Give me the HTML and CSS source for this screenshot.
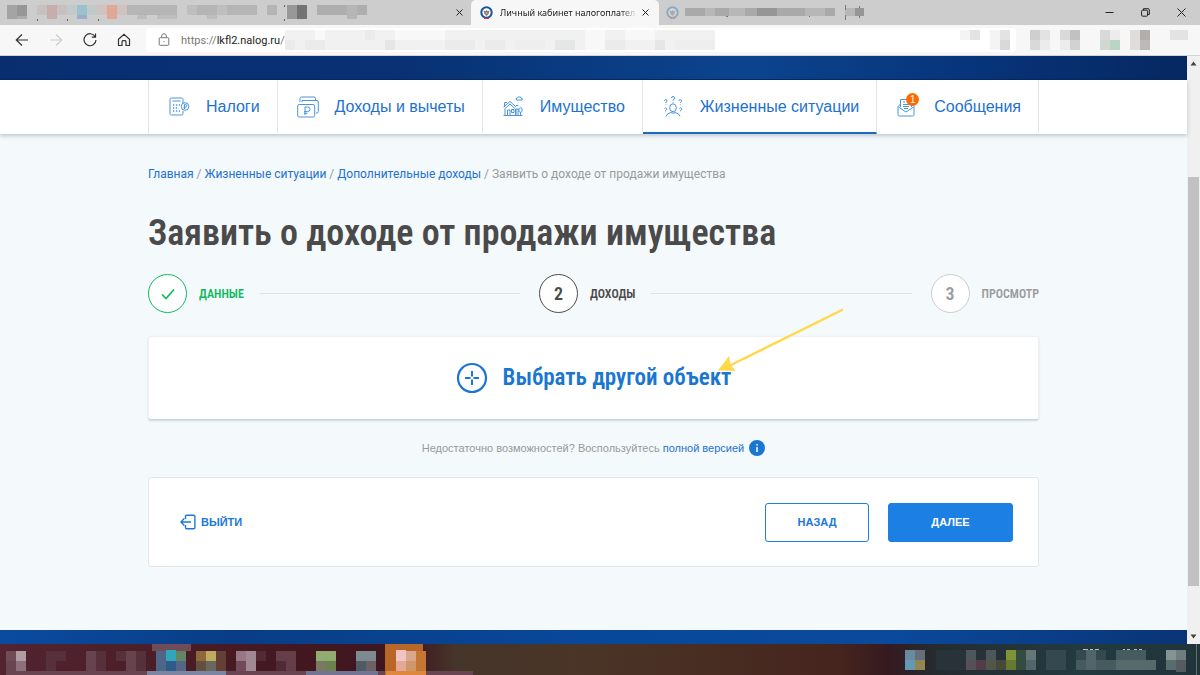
FILE: index.html
```html
<!DOCTYPE html>
<html lang="ru">
<head>
<meta charset="utf-8">
<title>Личный кабинет налогоплательщика</title>
<link rel="stylesheet" href="styles.css">
</head>
<body>
<div class="browser">
  <div class="tabstrip">
    <div class="tab tab-first">
      <svg class="blur-tabs" width="375" height="25" shape-rendering="crispEdges" aria-hidden="true">
        <path fill="#a4a4a4" d="M7 5h10v14H7z"/><path fill="#979797" d="M17 5h10v11H17z"/><path fill="#acacac" d="M17 16h10v3H17z"/>
        <path fill="#c7c0c0" d="M37 5h10v10H37zM57 5h10v10H57z"/><path fill="#c8adad" d="M47 5h10v14H47z"/>
        <path fill="#c2c9ca" d="M67 5h10v10H67zM87 5h10v10H87z"/><path fill="#9ac1cc" d="M77 5h10v10H77z"/><path fill="#9daec8" d="M77 15h10v4H77z"/>
        <path fill="#cfc2bf" d="M97 5h10v10H97zM117 5h10v10H117z"/><path fill="#e0a796" d="M107 5h10v14H107z"/>
        <path fill="#b5b5b5" d="M127 5h50v10H127zM197 5h20v10H197zM227 5h30v10H227zM267 5h10v10H267z"/>
        <path fill="#bebebe" d="M137 15h10v4H137zM157 15h20v4H157zM187 5h10v10H187zM207 15h10v4H207zM217 5h10v10H217z"/>
        <path fill="#989898" d="M287 5h10v14H287z"/><path fill="#737373" d="M297 5h10v14H297z"/>
        <path fill="#aeaeae" d="M317 5h30v10H317zM357 5h10v10H357z"/><path fill="#b5b6b8" d="M347 5h10v14H347z"/>
        <path fill="#666" d="M37 19h1v2h-1zM67 19h1v2h-1zM98 19h1v2h-1zM284 5h1v2h-1zM284 19h1v2h-1z"/>
      </svg>
      <button class="tab-close" aria-label="Закрыть вкладку"><svg width="7" height="7" viewBox="0 0 7 7"><path d="M.5.5l6 6M6.500.5l-6 6"/></svg></button>
    </div>
    <div class="tab tab-active">
      <svg class="favicon" width="13" height="13" viewBox="0 0 13 13"><circle cx="6.500" cy="6.500" r="5.200" fill="#fff" stroke="#17549c" stroke-width="2"/><path d="M3.500 4.500l2 .8 1-1.300 1 1.300 2-.8-1 3.500-2 2-2-2z" fill="#75767d"/><path d="M5.500 6h2v2h-2z" fill="#d9a84e"/><path d="M4 11.700h5v1.300H4z" fill="#d33"/></svg>
      <span class="tab-title">Личный кабинет налогоплател</span>
      <button class="tab-close" aria-label="Закрыть вкладку"><svg width="7" height="7" viewBox="0 0 7 7"><path d="M.5.5l6 6M6.500.5l-6 6"/></svg></button>
    </div>
    <div class="tab tab-last">
      <svg class="favicon faded" width="13" height="13" viewBox="0 0 13 13"><circle cx="6.500" cy="6.500" r="5.200" fill="#ddd" stroke="#5b94c0" stroke-width="2"/><path d="M3.500 4.500l2 .8 1-1.300 1 1.300 2-.8-1 3.500-2 2-2-2z" fill="#8e939b"/><path d="M4 11.700h5v1.300H4z" fill="#d66"/></svg>
      <svg width="190" height="25" shape-rendering="crispEdges" aria-hidden="true">
        <path fill="#a9a9a9" d="M6 8h20v8H6zM36 8h14v8H36zM66 8h60v8H66zM146 8h10v8h-10z"/><path fill="#b7b7b7" d="M26 8h10v8H26zM50 8h16v8H50zM126 8h20v8h-20zM166 8h10v8h-10z"/>
        <path fill="#969696" d="M78 8h20v8H78zM176 8h9v8h-9z"/><path fill="#777" d="M166 5h1v5h-1zM166 15h1v5h-1zM180 6h1v2h-1zM180 16h1v2h-1zM130 16h1v1h-1zM47 16h2v1h-2z"/>
      </svg>
    </div>
    <div class="window-controls">
      <button aria-label="Свернуть"><svg width="9" height="9" viewBox="0 0 9 9"><path d="M.5 4.500h8"/></svg></button>
      <button aria-label="Восстановить"><svg width="9" height="9" viewBox="0 0 9 9"><rect x=".6" y="2.200" width="6" height="6" rx="1"/><path d="M2.500 2V.7h4.700q1.100 0 1.100 1.100v4.700H7"/></svg></button>
      <button aria-label="Закрыть"><svg width="9" height="9" viewBox="0 0 9 9"><path d="M.5.5l8 8M8.500.5l-8 8"/></svg></button>
    </div>
  </div>

  <div class="toolbar">
    <button class="tool" aria-label="Назад"><svg width="14" height="14" viewBox="0 0 14 14"><path d="M7 1.500L1.300 7 7 12.500M1.500 7H13"/></svg></button>
    <button class="tool tool-off" aria-label="Вперёд" disabled><svg width="14" height="14" viewBox="0 0 14 14"><path d="M7 1.500L12.700 7 7 12.500M12.500 7H1"/></svg></button>
    <button class="tool" aria-label="Обновить"><svg width="14" height="14" viewBox="0 0 14 14"><path d="M12.200 3.700A6 6 0 1 0 13 7M12.500.5v3.700H8.800"/></svg></button>
    <button class="tool" aria-label="Домой"><svg width="14" height="14" viewBox="0 0 14 14"><path d="M1.500 6.300L7 1.300l5.500 5v6.200H9V8.700q0-1-1-1H6q-1 0-1 1v3.800H1.500z"/></svg></button>
    <div class="address">
      <svg class="lock" width="12" height="14" viewBox="0 0 12 14"><rect x="1.200" y="4.700" width="9.600" height="7.600" rx="1"/><path d="M3.700 4.500V3a2.300 2.300 0 0 1 4.600 0v1.500M6 8v1.200"/></svg>
      <span class="url">https://<b>lkfl2.nalog.ru</b>/</span>
      <svg class="blur-url" width="430" height="20" shape-rendering="crispEdges" aria-hidden="true">
        <path fill="#f1f1f1" d="M0 0h430v20H0z"/><path fill="#ebebeb" d="M0 10h10v10H0zM20 10h20v10H20zM80 0h10v10H80zM160 10h30v10h-30zM200 10h20v10h-20zM320 10h20v10h-20z"/><path fill="#e5e7e7" d="M100 10h10v10h-10zM270 10h20v10h-20zM370 10h10v10h-10z"/><path fill="#f8f8f8" d="M30 0h10v10H30zM110 0h50v10h-50zM300 0h20v20h-20zM340 0h30v10h-30z"/><path fill="#eee" d="M230 10h30v10h-30zM390 10h40v10h-40z"/>
      </svg>
    </div>
    <svg class="blur-ext" width="230" height="20" shape-rendering="crispEdges" aria-hidden="true">
      <path fill="#f4f4f4" d="M0 0h10v10H0zM30 0h10v20H30z"/><path fill="#e3e3e3" d="M10 0h10v10H10zM40 0h10v10H40zM80 0h10v10H80zM210 0h18v10h-18z"/><path fill="#d9d9d9" d="M40 10h10v10H40zM70 10h10v10H70zM100 0h10v10h-10zM140 0h10v10h-10z"/><path fill="#cfcfcf" d="M70 0h10v10H70z"/><path fill="#c1c1c1" d="M110 0h10v10h-10z"/><path fill="#d2d2d2" d="M110 10h10v10h-10z"/><path fill="#ececec" d="M80 10h10v10H80zM100 10h10v10h-10zM150 0h10v10h-10z"/><path fill="#cfd8d1" d="M140 10h10v10h-10z"/><path fill="#b9d6c4" d="M150 10h10v10h-10z"/><path fill="#dfdddb" d="M170 0h10v20h-10z"/><path fill="#b2afab" d="M180 0h10v10h-10z"/><path fill="#bcbab8" d="M180 10h10v10h-10z"/>
    </svg>
  </div>

  <div class="viewport">
    <div class="page">
      <div class="banner"></div>
      <nav class="nav">
        <div class="container nav-list">
          <a class="nav-item" href="#">
            <svg width="22" height="22" viewBox="0 0 22 22"><path d="M15 7V3.500Q15 2 13.500 2h-10Q2 2 2 3.500v14Q2 19 3.500 19h10q1.500 0 1.500-1.500V15M4.500 5h8"/><path stroke-dasharray="1.300 1.600" stroke-width="1.600" d="M5 9h7M5 12h6M5 15h7"/><circle cx="17" cy="10.500" r="3.800"/><path d="M16.500 13V8.500h1q1.300 0 1.300 1.200T17.500 11h-2M15.500 12h2"/></svg>
            <span>Налоги</span></a>
          <a class="nav-item" href="#">
            <svg width="22" height="22" viewBox="0 0 22 22"><path d="M3 6V2.500Q3 1 4.500 1H17q1.500 0 1.500 1.500v2M5 6V4.500h15q1.300 0 1.300 1.500v9.500q0 1.500-1.300 1.500h-1"/><rect x=".7" y="8.500" width="17" height="12.500" rx="1.500"/><path d="M8 19v-8h2.500q2.500 0 2.500 2.300t-2.500 2.300H7M7 17.300h3.500"/></svg>
            <span>Доходы и вычеты</span></a>
          <a class="nav-item" href="#">
            <svg width="22" height="22" viewBox="0 0 22 22"><path d="M1.500 19.500h19M2.500 11v-4.500H5M1.500 11L8 5.500l6 5.500M2.500 13l5.500-5 5.500 5v6M3 13v6M5.500 19v-5h2.500v5M9.500 13.500h2.500v3H9.500zM14 19v-6h2v6M16.500 9.500H14M18.500 19v-3"/><ellipse cx="18.500" cy="14" rx="1.700" ry="2.300"/><path d="M14.500 4q-1.500-2 1-2 .5-1.800 2.300-1 1.500-.2 1.200 1.200 2 .1 1.300 1.800z"/></svg>
            <span>Имущество</span></a>
          <a class="nav-item current" href="#" aria-current="page">
            <svg width="22" height="22" viewBox="0 0 22 22"><ellipse cx="11" cy="11.800" rx="3.300" ry="4"/><path d="M4 20.500q.5-3 5-4 2 1.500 4 0 4.500 1 5 4M9.500 2q0-1.500 1.500-1.500T12.500 2 11 4v.7M11 6v.7M2.500 4.800q0-1.200 1.300-1.200T5 4.800 3.800 6.400V7M3.800 8v.6M17 4.800q0-1.200 1.300-1.200t1.200 1.200-1.200 1.600V7M18.300 8v.6M2.500 12.500q1-1.200 2 0t-1 2v.8M17.500 12.500q1-1.200 2 0t-1 2v.8"/></svg>
            <span>Жизненные ситуации</span></a>
          <a class="nav-item" href="#">
            <span class="mail">
              <svg width="22" height="22" viewBox="0 0 22 22"><path d="M4.500 11V3.500h11V11M4.500 8L2 10.500v8Q2 20 3.500 20h13q1.500 0 1.500-1.500v-8L15.500 8M2.500 11l7.500 5 7.500-5M7 6h2M7 8.500h6M7 10.500h6M8 12.500h4"/></svg>
              <span class="badge">1</span>
            </span>
            <span>Сообщения</span></a>
        </div>
      </nav>

      <main class="container main">
        <div class="crumbs"><a href="#">Главная</a> / <a href="#">Жизненные ситуации</a> / <a href="#">Дополнительные доходы</a> / Заявить о доходе от продажи имущества</div>
        <h1>Заявить о доходе от продажи имущества</h1>

        <div class="steps">
          <div class="step done"><span class="dot"><svg width="14" height="12" viewBox="0 0 14 12"><path d="M1 6.500l4 4L13 1.500"/></svg></span><span class="step-name">ДАННЫЕ</span></div>
          <div class="line"></div>
          <div class="step active"><span class="dot">2</span><span class="step-name">ДОХОДЫ</span></div>
          <div class="line"></div>
          <div class="step"><span class="dot">3</span><span class="step-name">ПРОСМОТР</span></div>
        </div>

        <section class="card choose">
          <button class="choose-button">
            <svg width="32" height="32" viewBox="0 0 32 32"><circle cx="16" cy="16" r="14" stroke-width="2.200"/><path stroke-width="2" d="M16 9v5.500M16 17.500V23M9 16h5.500M17.500 16H23"/></svg>
            <span>Выбрать другой объект</span>
          </button>
          <svg class="pointer" width="128" height="66" viewBox="0 0 128 66" aria-hidden="true"><path d="M125 2L12 58" stroke="#ffd94a" stroke-width="2.400" stroke-linecap="round"/><path d="M1 62.500L12 48 13.500 57l5 6z" fill="#ffd94a"/></svg>
        </section>

        <p class="hint"><span>Недостаточно возможностей? Воспользуйтесь <a href="#">полной версией</a></span>
          <svg width="16" height="16" viewBox="0 0 16 16"><circle cx="8" cy="8" r="8" fill="#1976d2"/><path d="M8 4v1.600M8 7v5" stroke="#fff" stroke-width="1.500"/></svg></p>

        <section class="card actions">
          <a class="exit" href="#"><svg width="16" height="16" viewBox="0 0 16 16"><path d="M5.500 5V2.500q0-1.200 1.200-1.200h7q1.200 0 1.200 1.200v11q0 1.200-1.200 1.200h-7q-1.200 0-1.200-1.200V11M11 8H1M4.300 4.500L.9 8l3.400 3.500"/></svg>ВЫЙТИ</a>
          <div class="buttons">
            <button class="btn btn-back">НАЗАД</button>
            <button class="btn btn-next">ДАЛЕЕ</button>
          </div>
        </section>
      </main>
      <div class="footer-band"></div>
    </div>
    <div class="scrollbar" aria-hidden="true">
      <svg width="7" height="5" viewBox="0 0 7 5"><path d="M.5 4.500l3-4 3 4z"/></svg>
      <div class="track"><div class="thumb"></div></div>
      <svg width="7" height="5" viewBox="0 0 7 5"><path d="M.5.5l3 4 3-4z"/></svg>
    </div>
  </div>

  <div class="taskbar" aria-hidden="true">
    <svg width="475" height="31" shape-rendering="crispEdges">
      <path fill="#694551" d="M6 27h467v4H6z"/>
      <path fill="#704c57" d="M6 7h10v10H6z"/><path fill="#b09ca3" d="M16 7h10v10H16z"/><path fill="#694451" d="M6 17h10v10H6z"/><path fill="#8e707c" d="M16 17h10v10H16z"/>
      <path fill="#56303a" d="M46 7h20v10H46zM46 17h10v10H46zM96 7h10v20H96zM116 7h10v10h-10zM136 7h10v20h-10z"/><path fill="#66434e" d="M86 7h10v20H86zM126 7h10v20h-10z"/>
      <path fill="#704c58" d="M152 0h39v7h-39z"/><path fill="#4e6688" d="M156 7h10v20h-10z"/><path fill="#30a5bb" d="M166 6h10v11h-10z"/><path fill="#2f5b8a" d="M166 17h10v10h-10z"/><path fill="#648563" d="M176 7h10v10h-10z"/><path fill="#576687" d="M176 17h10v10h-10z"/>
      <path fill="#7c86a3" d="M147 27h79v4h-79z"/><path fill="#8f693a" d="M196 7h10v10h-10z"/><path fill="#c0a961" d="M206 7h10v10h-10z"/><path fill="#633f35" d="M216 7h10v20h-10z"/><path fill="#64503e" d="M196 17h10v10h-10z"/><path fill="#68685e" d="M206 17h10v10h-10z"/>
      <path fill="#967882" d="M236 7h10v10h-10z"/><path fill="#a18993" d="M246 7h10v20h-10z"/><path fill="#714b59" d="M236 17h10v10h-10z"/><path fill="#502a34" d="M256 7h10v10h-10zM276 17h10v10h-10z"/><path fill="#643e49" d="M276 7h20v10h-20zM286 17h10v10h-10z"/>
      <path fill="#91ac70" d="M316 7h20v10h-20z"/><path fill="#7b7864" d="M316 17h10v10h-10z"/><path fill="#6f8050" d="M326 17h10v10h-10z"/><path fill="#737491" d="M306 27h72v4h-72z"/><path fill="#7d8b90" d="M356 7h20v10h-20z"/><path fill="#4e5b64" d="M356 17h10v10h-10z"/><path fill="#6b6261" d="M366 17h10v10h-10z"/>
      <path fill="#b96729" d="M385 0h38v31h-38z"/><path fill="#de883e" d="M386 27h40v4h-40z"/><path fill="#c47635" d="M416 7h10v20h-10z"/><path fill="#efc4c2" d="M396 6h10v11h-10z"/><path fill="#daa78c" d="M406 7h10v10h-10z"/><path fill="#e4a995" d="M396 17h10v10h-10z"/><path fill="#cd9769" d="M406 17h10v10h-10z"/>
    </svg>
    <svg width="295" height="31" shape-rendering="crispEdges">
      <path fill="#698b9f" d="M0 6h10v10H0z"/><path fill="#6499b5" d="M0 16h10v10H0z"/><path fill="#666e7d" d="M10 6h10v10H10z"/><path fill="#938550" d="M10 16h10v10H10z"/>
      <path fill="#293238" d="M31 6h30v20H31zM71 6h10v10H71z"/><path fill="#4e575c" d="M61 6h10v10H61zM81 6h10v10H81z"/><path fill="#565159" d="M61 16h10v10H61z"/><path fill="#543d45" d="M71 16h10v10H71z"/><path fill="#51564a" d="M81 16h10v10H81z"/><path fill="#46483a" d="M91 16h10v10H91z"/><path fill="#7f9439" d="M101 6h10v10h-10z"/><path fill="#657a30" d="M101 16h10v10h-10z"/><path fill="#344c40" d="M111 6h10v20h-10z"/><path fill="#657678" d="M121 6h10v10h-10z"/><path fill="#52656a" d="M121 16h10v10h-10zM181 6h10v20h-10z"/><path fill="#34494f" d="M141 6h20v20h-20zM171 6h10v10h-10zM191 6h10v10h-10z"/><path fill="#465b5e" d="M171 16h10v10h-10zM191 16h20v10h-20zM211 6h30v10h-30z"/><path fill="#566a6c" d="M211 16h40v10h-40z"/><path fill="#879292" d="M261 6h10v10h-10z"/><path fill="#6f7d7e" d="M271 6h10v10h-10z"/><path fill="#596d6e" d="M261 16h10v10h-10z"/><path fill="#555b5e" d="M271 16h10v12h-10z"/>
      <path fill="#b9c2c3" d="M178 5h5v1h-5zM185 5h3v1h-3zM190 5h4v1h-4zM218 5h2v1h-2zM222 5h3v1h-3zM229 5h3v1h-3zM234 5h3v1h-3z"/><path fill="#60706f" d="M291 0h1v31h-1z"/>
    </svg>
  </div>
</div>
</body>
</html>
```
FILE: styles.css
```css
* { box-sizing: border-box; }
body { margin: 0; font-family: "Liberation Sans", Arial, sans-serif; color: #4a4a4a; }
button { font: inherit; border: 0; padding: 0; background: none; color: inherit; cursor: pointer; }
a { color: #2371cf; text-decoration: none; }
svg { display: block; flex: none; fill: none; }

.browser { display: flex; flex-direction: column; height: 100vh; min-height: 640px; overflow: hidden; }

/* Browser tabs */
.tabstrip { display: flex; flex: none; height: 25px; background: #cdcdcd; }
.tab { display: flex; align-items: center; font-family: "Noto Sans", sans-serif; font-size: 9px; color: #222; }
.tab-first { width: 471px; justify-content: space-between; padding-right: 8px; }
.tab-active { width: 188px; padding: 0 10px 0 9px; background: #f7f7f7; border-radius: 5px 5px 0 0; }
.tab-last { padding-left: 7px; }
.favicon { margin-right: 7px; }
.tab-last .favicon { margin-right: 0; opacity: 0.6; }
.tab-title { flex: 1; margin-right: 5px; white-space: nowrap; mask-image: linear-gradient(90deg, #000 88%, transparent); }
.tab-close svg, .window-controls svg { stroke: #222; stroke-width: 1; }
.window-controls { display: flex; align-items: center; gap: 27px; margin-left: auto; padding-right: 14px; }

/* Address bar */
.toolbar { display: flex; flex: none; align-items: center; height: 31px; padding-left: 15px; background: #f7f7f7; border-bottom: 1px solid #d5d5d5; }
.tool { margin-right: 20px; }
.tool svg { stroke: #333; stroke-width: 1.200; }
.tool-off svg { stroke: #ccc; }
.address { display: flex; flex: 1; align-items: center; height: 24px; padding-left: 12px; background: #fff; border-radius: 4px; margin-left: -5px; }
.lock { stroke: #777; stroke-width: 1; margin-right: 11px; }
.url { font-family: Roboto, sans-serif; font-size: 11px; color: #777; white-space: nowrap; }
.url b { font-weight: 400; color: #222; }
.blur-ext { margin: 0 10px 0 -56px; }

/* Site */
.viewport { display: flex; flex: 1; min-height: 0; }
.page { display: flex; flex: 1; flex-direction: column; min-width: 0; background: #f4f9fc; }
.banner { flex: none; height: 24px; background: linear-gradient(90deg, #082e70, #083274 35%, #0b448e 63%, #07347a 82%, #062860); border-bottom: 1px solid #062a66; }
.container { width: 100%; max-width: 891px; margin: 0 auto; }
.nav { position: relative; flex: none; background: #fff; box-shadow: 0 2px 4px rgba(40, 60, 70, 0.25); }
.nav-list { display: flex; height: 54px; border-left: 1px solid #e3e6e8; }
.nav-item { display: flex; flex: auto; align-items: center; justify-content: center; gap: 16px; padding: 2px 0 0 2px; border-right: 1px solid #e3e6e8; border-bottom: 2px solid transparent; font-size: 16px; white-space: nowrap; }
.nav-item.current { border-bottom-color: #1a6ac4; }
.nav-item svg { stroke: #4a94dc; stroke-width: 1; }
.mail { position: relative; }
.badge { position: absolute; top: -3px; right: -1px; width: 13px; height: 13px; border-radius: 50%; background: #ff6a00; color: #fff; font-size: 10px; line-height: 13px; text-align: center; }

.main { flex: 1; }
.crumbs { margin-top: 31px; font: 12px/18px Roboto, sans-serif; color: #999; }
h1 { margin: 25px 0 16px; font: 600 36px/50px "Roboto Condensed", "Liberation Sans Narrow", sans-serif; white-space: nowrap; color: #4a4a4a; }

.steps { display: flex; align-items: center; }
.step { display: flex; align-items: center; gap: 12px; color: #9b9b9b; font: 600 12px/18px "Roboto Condensed", "Liberation Sans Narrow", sans-serif; }
.dot { display: flex; align-items: center; justify-content: center; width: 39px; height: 39px; border: 1px solid #ccc; border-radius: 50%; background: #fff; font-size: 18px; }
.done { color: #0fba5f; }
.done .dot { border-color: #0fba5f; }
.done svg { stroke: #0fba5f; stroke-width: 1.700; }
.active { color: #4a4a4a; }
.active .dot { border-color: #4a4a4a; }
.line { flex: 1; height: 1px; margin: 0 19px 0 16px; background: #dde3e6; }

.card { background: #fff; border-radius: 3px; }
.choose { position: relative; display: flex; justify-content: center; align-items: center; height: 84px; margin-top: 23px; border: 1px solid #edf1f4; border-bottom-color: #c8d3e0; box-shadow: 0 1px 2px rgba(60, 90, 130, 0.2); }
.choose-button { display: flex; align-items: center; gap: 15px; color: #1976d2; font: 600 23px/32px "Roboto Condensed", "Liberation Sans Narrow", sans-serif; }
.choose-button svg { stroke: #1976d2; }
.pointer { position: absolute; top: -29px; left: calc(50% + 123px); }
.hint { display: flex; align-items: center; justify-content: center; gap: 5px; margin: 18px 0 19px; font-size: 11px; line-height: 20px; color: #999; }
.actions { display: flex; align-items: center; justify-content: space-between; height: 90px; padding: 0 25px 0 31px; border: 1px solid #e1e7ea; }
.exit { display: flex; align-items: center; gap: 5px; font-size: 11px; font-weight: 700; color: #1b78d8; }
.exit svg { stroke: #1b78d8; stroke-width: 1.400; }
.buttons { display: flex; gap: 19px; }
.btn { height: 39px; border: 1px solid #1b7fe3; border-radius: 3px; font-size: 11px; font-weight: 700; }
.btn-back { width: 104px; color: #1b78d8; }
.btn-next { width: 125px; background: #1b7fe3; color: #fff; }
.footer-band { flex: none; height: 14px; background: linear-gradient(90deg, #0a4ba0, #093d86 20%, #08489b 50%, #0a499c 75%, #0a3476); }

.scrollbar { display: flex; flex: none; flex-direction: column; align-items: center; width: 13px; padding: 5px 0; background: #f0f0f0; }
.scrollbar svg { fill: #444; }
.track { flex: 1; width: 11px; padding: 111px 0 48px; }
.thumb { height: 100%; background: #c1c1c1; }

.taskbar { display: flex; flex: none; justify-content: space-between; height: 31px; background: linear-gradient(90deg, #52242f, #431720 25%, #3d1720 34%, #46352a 38%, #4a3426 50%, #46241e 70%, #351a20 74%, #252c30 78%, #223a40 90%, #20343a); }
```
